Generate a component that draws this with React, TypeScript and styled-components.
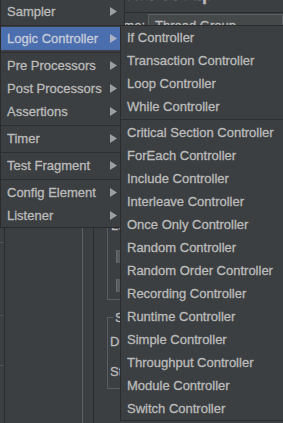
import React from "react";
import styled, { createGlobalStyle } from "styled-components";

const GlobalStyle = createGlobalStyle`
  html, body { margin: 0; padding: 0; background: #3c3f41; }
  body { font-family: "Liberation Sans", Arial, sans-serif; overflow: hidden; }
  * { box-sizing: border-box; }
`;

const Screen = styled.div`
  position: relative;
  width: 283px;
  height: 423px;
  overflow: hidden;
  background: #3c3f41;
  color: #bbbbbb;
  font-size: 13px;
  -webkit-text-stroke: 0.3px currentColor;
`;

const Workspace = styled.div`
  display: grid;
  grid-template-columns: 4px 1px 77px 1px 10px 1px 1fr;
  height: 100%;
`;

const TickColumn = styled.div`
  display: flex;
  flex-direction: column;
`;

const Tick = styled.div<{ $gap: number }>`
  margin-top: ${(p) => p.$gap}px;
  height: 1px;
  width: 4px;
  background: #505355;
`;

const VLine = styled.div<{ $light?: boolean }>`
  background: ${(p) => (p.$light ? "#5d6062" : "#2b2b2b")};
`;

const Pane = styled.div``;

const Editor = styled.div`
  display: flex;
  flex-direction: column;
  min-width: 0;
  overflow: hidden;
`;

const TitleBar = styled.div`
  height: 12px;
  flex: none;
  overflow: hidden;
  display: flex;
  align-items: flex-end;
`;

const Title = styled.div`
  flex: none;
  font-size: 18px;
  font-weight: bold;
  line-height: 18px;
  padding-bottom: 9px;
  white-space: nowrap;
`;

const Rule = styled.div`
  height: 1px;
  flex: none;
  background: #2b2b2b;
  margin-bottom: 1px;
`;

const NameRow = styled.div`
  display: flex;
  flex: none;
  height: 24px;
`;

const NameLabel = styled.div`
  width: 54px;
  padding-right: 3px;
  text-align: right;
  line-height: 24px;
  white-space: nowrap;
`;

const Field = styled.div`
  flex: 1;
  border: 1px solid #5e6163;
  background: #45494a;
  padding-left: 6px;
  line-height: 22px;
  white-space: nowrap;
`;

const Group = styled.div<{ $top: number; $height: number }>`
  position: relative;
  margin-top: ${(p) => p.$top}px;
  margin-left: 13px;
  height: ${(p) => p.$height}px;
  width: 260px;
  flex: none;
  border: 1px solid #5b5e60;
  display: flex;
  flex-direction: column;
`;

const LoopGroup = styled(Group)`
  justify-content: flex-end;
  padding-bottom: 7px;
`;

const SchedGroup = styled(Group)`
  padding-top: 14px;
`;

const Legend = styled.span`
  position: absolute;
  top: -8px;
  left: 5px;
  width: 10px;
  overflow: hidden;
  padding: 0 2px;
  background: #3c3f41;
  line-height: 15px;
  white-space: nowrap;
`;

const GroupLabel = styled.div`
  margin-left: 3px;
  width: 10px;
  overflow: hidden;
  line-height: 16px;
  white-space: nowrap;
`;

const FormRow = styled.div<{ $gap?: number }>`
  margin-left: 2px;
  margin-top: ${(p) => p.$gap ?? 0}px;
  width: 11px;
  overflow: hidden;
  line-height: 20px;
  white-space: nowrap;
`;

const FieldStub = styled.div`
  margin-left: 8px;
  margin-top: 16px;
  height: 13px;
  width: 120px;
  background: #595c5e;
  border-left: 1px solid #6a6d6f;
`;

/* ---------- popup menus ---------- */

const Popup = styled.div<{ $left: number; $top: number; $width: number }>`
  position: absolute;
  left: ${(p) => p.$left}px;
  top: ${(p) => p.$top}px;
  width: ${(p) => p.$width}px;
  background: #3c3f41;
  border: 1px solid #2b2b2b;
  display: flex;
  flex-direction: column;
`;

const MainPopup = styled(Popup)`
  border-top: none;
`;

const MenuItem = styled.div<{ $active?: boolean; $pad: number }>`
  height: 23px;
  display: flex;
  align-items: center;
  justify-content: space-between;
  padding: 0 7px 0 ${(p) => p.$pad}px;
  background: ${(p) => (p.$active ? "#4b6eaf" : "transparent")};
  color: ${(p) => (p.$active ? "#c6cdd9" : "#bbbbbb")};
  white-space: nowrap;
  font-size: 13px;
`;

const Separator = styled.div<{ $h: number }>`
  height: ${(p) => p.$h}px;
  display: flex;
  align-items: center;
  &::before {
    content: "";
    flex: 1;
    height: 1px;
    background: #2d2f31;
  }
`;

const Arrow = ({ active }: { active?: boolean }) => (
  <svg width="7" height="9" viewBox="0 0 7 9">
    <polygon points="0,0 7,4.5 0,9" fill={active ? "#a9b3c5" : "#9c9fa1"} />
  </svg>
);

type Entry = { label?: string; sep?: boolean; active?: boolean };

const mainMenu: Entry[] = [
  { label: "Sampler" },
  { sep: true },
  { label: "Logic Controller", active: true },
  { sep: true },
  { label: "Pre Processors" },
  { label: "Post Processors" },
  { label: "Assertions" },
  { sep: true },
  { label: "Timer" },
  { sep: true },
  { label: "Test Fragment" },
  { sep: true },
  { label: "Config Element" },
  { label: "Listener" },
];

const subMenu: Entry[] = [
  { label: "If Controller" },
  { label: "Transaction Controller" },
  { label: "Loop Controller" },
  { label: "While Controller" },
  { sep: true },
  { label: "Critical Section Controller" },
  { label: "ForEach Controller" },
  { label: "Include Controller" },
  { label: "Interleave Controller" },
  { label: "Once Only Controller" },
  { label: "Random Controller" },
  { label: "Random Order Controller" },
  { label: "Recording Controller" },
  { label: "Runtime Controller" },
  { label: "Simple Controller" },
  { label: "Throughput Controller" },
  { label: "Module Controller" },
  { label: "Switch Controller" },
];

export default function App() {
  return (
    <>
      <GlobalStyle />
      <Screen>
        <Workspace>
          <TickColumn>
            <Tick $gap={242} />
            <Tick $gap={72} />
            <Tick $gap={49} />
          </TickColumn>
          <VLine />
          <Pane />
          <VLine $light />
          <Pane />
          <VLine />
          <Editor>
            <TitleBar>
              <Title>Thread Group</Title>
            </TitleBar>
            <Rule />
            <NameRow>
              <NameLabel>Name:</NameLabel>
              <Field>Thread Group</Field>
            </NameRow>
            <LoopGroup $top={12} $height={250}>
              <GroupLabel>Loop Count:</GroupLabel>
              <FieldStub />
              <FieldStub />
            </LoopGroup>
            <SchedGroup $top={17} $height={72}>
              <Legend>Scheduler Configuration</Legend>
              <FormRow>Duration (seconds)</FormRow>
              <FormRow $gap={10}>Startup delay (seconds)</FormRow>
            </SchedGroup>
          </Editor>
        </Workspace>

        <MainPopup $left={0} $top={0} $width={125}>
          {mainMenu.map((e, i) =>
            e.sep ? (
              <Separator key={i} $h={4} />
            ) : (
              <MenuItem key={i} $active={e.active} $pad={6}>
                <span>{e.label}</span>
                <Arrow active={e.active} />
              </MenuItem>
            )
          )}
        </MainPopup>

        <Popup $left={120} $top={25} $width={190}>
          {subMenu.map((e, i) =>
            e.sep ? (
              <Separator key={i} $h={3} />
            ) : (
              <MenuItem key={i} $pad={6}>
                <span>{e.label}</span>
              </MenuItem>
            )
          )}
        </Popup>
      </Screen>
    </>
  );
}
